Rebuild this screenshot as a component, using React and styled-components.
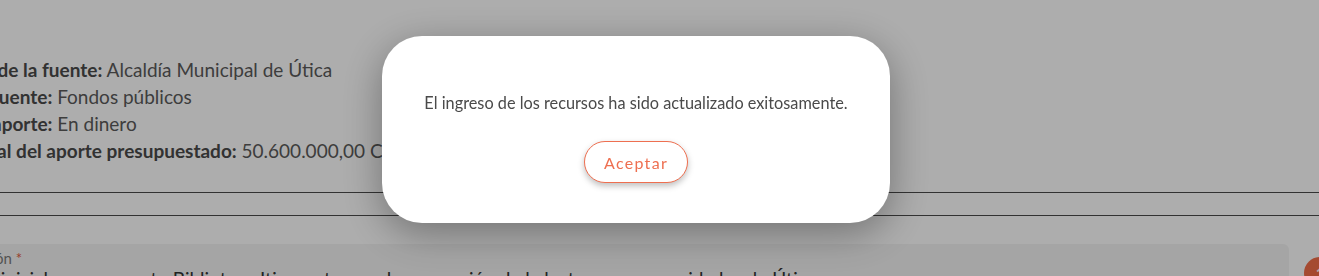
import React from "react";
import styled, { createGlobalStyle } from "styled-components";

const GlobalStyle = createGlobalStyle`
  html, body {
    margin: 0;
    padding: 0;
    background: #ffffff;
    font-family: Lato, "Open Sans", sans-serif;
    overflow: hidden;
  }
`;

const Page = styled.div`
  width: 1319px;
  height: 276px;
  overflow: hidden;
  position: relative;
`;

const Content = styled.div`
  margin-left: -76px;
  padding-top: 56px;
  display: flex;
  flex-direction: column;
`;

const InfoList = styled.div`
  display: flex;
  flex-direction: column;
`;

const InfoRow = styled.div`
  font-size: 19px;
  line-height: 27px;
  color: #5a5a5a;
  white-space: nowrap;
  b {
    font-weight: 700;
    color: #4a4a4a;
  }
`;

const Rule = styled.hr`
  border: none;
  border-top: 1px solid #4b4b4b;
  margin: ${(p) => p.$top}px 0 0 0;
  width: 1450px;
`;

const FieldRow = styled.div`
  display: flex;
  align-items: flex-start;
  margin: 28px 0 0 4px;
`;

const Field = styled.div`
  width: 1361px;
  background: #f4f4f4;
  border-radius: 6px;
  padding: 5px 10px 0 6px;
  box-sizing: border-box;
  height: 60px;
`;

const Label = styled.div`
  font-size: 15px;
  line-height: 18px;
  color: #7a7a7a;
  white-space: nowrap;
  span {
    color: #e05a3a;
  }
`;

const Value = styled.div`
  font-size: 19px;
  line-height: 24px;
  color: #333333;
  white-space: nowrap;
  padding-left: 4px;
`;

const Badge = styled.div`
  position: absolute;
  left: 1304px;
  top: 257px;
  width: 32px;
  height: 32px;
  border-radius: 50%;
  background: #f36d48;
  color: #ffffff;
  font-weight: 700;
  font-size: 15px;
  display: flex;
  align-items: center;
  justify-content: center;
`;

const Overlay = styled.div`
  position: fixed;
  inset: 0;
  background: rgba(0, 0, 0, 0.32);
  display: flex;
  align-items: flex-start;
  justify-content: flex-start;
  padding: 36px 0 0 382px;
`;

const Modal = styled.div`
  width: 508px;
  height: 187px;
  background: #ffffff;
  border-radius: 40px;
  box-shadow: 0 10px 40px rgba(0, 0, 0, 0.35);
  display: flex;
  flex-direction: column;
  align-items: center;
  box-sizing: border-box;
  padding-top: 56px;
`;

const Message = styled.p`
  margin: 0;
  font-size: 16.3px;
  line-height: 22px;
  color: #4a4a4a;
`;

const AcceptButton = styled.button`
  margin-top: 27px;
  width: 104px;
  height: 42px;
  border-radius: 21px;
  border: 1px solid #ee6f50;
  background: #ffffff;
  color: #ee6f50;
  font-family: Lato, "Open Sans", sans-serif;
  font-size: 16px;
  letter-spacing: 1.3px;
  box-shadow: 0 3px 6px rgba(0, 0, 0, 0.25);
  cursor: pointer;
`;

const App = () => {
  return (
    <>
      <GlobalStyle />
      <Page>
        <Content>
          <InfoList>
            <InfoRow>
              <b>Nombre de la fuente:</b> Alcaldía Municipal de Útica
            </InfoRow>
            <InfoRow>
              <b>Tipo de fuente:</b> Fondos públicos
            </InfoRow>
            <InfoRow>
              <b>Tipo de aporte:</b> En dinero
            </InfoRow>
            <InfoRow>
              <b>Valor total del aporte presupuestado:</b> 50.600.000,00 COP
            </InfoRow>
          </InfoList>
          <Rule $top={28} />
          <Rule $top={22} />
          <FieldRow>
            <Field>
              <Label>
                Descripción <span>*</span>
              </Label>
              <Value>
                Aporte inicial para proyecto Biblioteca Itinerante para la
                promoción de la lectura en comunidades de Útica
              </Value>
            </Field>
          </FieldRow>
        </Content>
        <Badge>1</Badge>
      </Page>
      <Overlay>
        <Modal>
          <Message>
            El ingreso de los recursos ha sido actualizado exitosamente.
          </Message>
          <AcceptButton>Aceptar</AcceptButton>
        </Modal>
      </Overlay>
    </>
  );
};

export default App;
